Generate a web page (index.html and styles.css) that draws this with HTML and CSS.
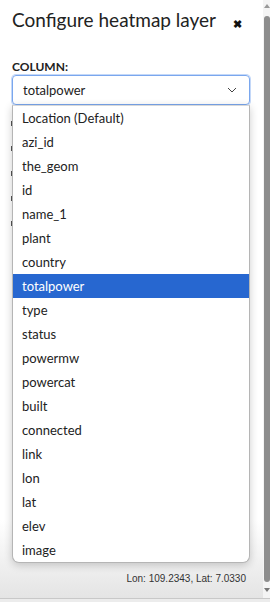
FILE: index.html
```html
<!DOCTYPE html>
<html>
	<head>
		<meta charset="utf-8">
		<title>Configure heatmap layer</title>
		<link rel="stylesheet" href="styles.css">
	</head>
	<body>
		<div class="page">
			<div class="panel">
				<div class="head">
					<h1 class="title">Configure heatmap layer</h1>
					<span class="close">&#10006;</span>
				</div>
				<div class="field">
					<label class="label">COLUMN:</label>
					<div class="select">
						<span>totalpower</span>
						<svg class="chevron" width="10" height="6" viewBox="0 0 10 6"><path d="M1 1 L5 5 L9 1" fill="none" stroke="#444" stroke-width="1"/></svg>
					</div>
					<!-- opened list -->
					<ul class="options">
						<li>Location (Default)</li>
						<li>azi_id</li>
						<li>the_geom</li>
						<li>id</li>
						<li>name_1</li>
						<li>plant</li>
						<li>country</li>
						<li class="current">totalpower</li>
						<li>type</li>
						<li>status</li>
						<li>powermw</li>
						<li>powercat</li>
						<li>built</li>
						<li>connected</li>
						<li>link</li>
						<li>lon</li>
						<li>lat</li>
						<li>elev</li>
						<li>image</li>
					</ul>
					<!-- edges of the fields hidden under the list -->
					<div class="behind">
						<i></i>
						<i></i>
						<i></i>
						<i></i>
						<i></i>
					</div>
				</div>
				<div class="foot">Lon: 109.2343, Lat: 7.0330</div>
			</div>
			<div class="scroll">
				<span class="up"></span>
				<span class="thumb"></span>
				<span class="down"></span>
			</div>
		</div>
		<div class="hbar"></div>
	</body>
</html>
```

FILE: styles.css
```css
* {
	margin: 0;
	padding: 0;
	box-sizing: border-box;
}

ul {
	list-style: none;
}

body {
	width: 270px;
	height: 602px;
	overflow: hidden;
	font-family: Lato, "Noto Sans", sans-serif;
	color: #222;
	background-color: #f0f0f0;
}

.page {
	display: flex;
	height: 598px;
}

.panel {
	flex: 1;
	display: flex;
	flex-direction: column;
	padding: 0 0 0 12px;
	background: linear-gradient(to bottom, #ffffff 0, #ffffff 520px, #e4e4e4 100%);
}

.head {
	display: flex;
	align-items: center;
	padding-top: 4px;
	height: 34px;
}

.title {
	font-size: 19px;
	font-weight: normal;
	color: #222;
}

.close {
	margin-left: 17px;
	margin-top: 10px;
	font-size: 11px;
	font-weight: bold;
	color: #111;
}

.field {
	position: relative;
	margin-top: 25px;
	width: 238px;
}

.label {
	display: block;
	font-size: 12px;
	font-weight: bold;
	color: #222;
	height: 16px;
	line-height: 16px;
}

.select {
	display: flex;
	align-items: center;
	justify-content: space-between;
	height: 30px;
	padding: 0 12px 0 10px;
	border: 1px solid #7aa7ee;
	border-radius: 4px;
	box-shadow: 0 0 0 1px #c4d8f8;
	font-size: 13px;
	color: #222;
}

.options {
	position: absolute;
	left: 0;
	top: 46px;
	z-index: 2;
	width: 238px;
	background-color: #fff;
	border: 1px solid #b5b5b5;
	border-top-color: #d8d8d8;
	border-radius: 0 0 7px 7px;
	box-shadow: 0 2px 8px rgba(0, 0, 0, 0.2);
	overflow: hidden;
}

.options li {
	height: 24px;
	line-height: 24px;
	padding-left: 9px;
	font-size: 13px;
	color: #222;
}

.options li.current {
	background-color: #2767d0;
	color: #fff;
}

.behind {
	display: flex;
	flex-direction: column;
	gap: 20px;
	padding-top: 16px;
}

.behind i {
	display: block;
	width: 2px;
	height: 5px;
	margin-left: -1px;
	background-color: #555;
}

.foot {
	margin-top: auto;
	padding: 0 17px 14px 0;
	text-align: right;
	font-family: "Liberation Sans", Arial, sans-serif;
	font-size: 10px;
	color: #333;
}

.scroll {
	width: 7px;
	display: flex;
	flex-direction: column;
	align-items: center;
	background-color: #f4f4f4;
}

.up {
	width: 0;
	height: 0;
	margin-top: 4px;
	border-left: 3px solid transparent;
	border-right: 3px solid transparent;
	border-bottom: 4px solid #999;
}

.thumb {
	flex: 1;
	width: 6px;
	margin: 8px 0 6px;
	border-radius: 3px;
	background-color: #8d8d8d;
}

.down {
	width: 0;
	height: 0;
	margin-bottom: 6px;
	border-left: 3px solid transparent;
	border-right: 3px solid transparent;
	border-top: 4px solid #777;
}

.hbar {
	height: 4px;
	border-top: 1px solid #c8c8c8;
	background-color: #ececec;
}
```
